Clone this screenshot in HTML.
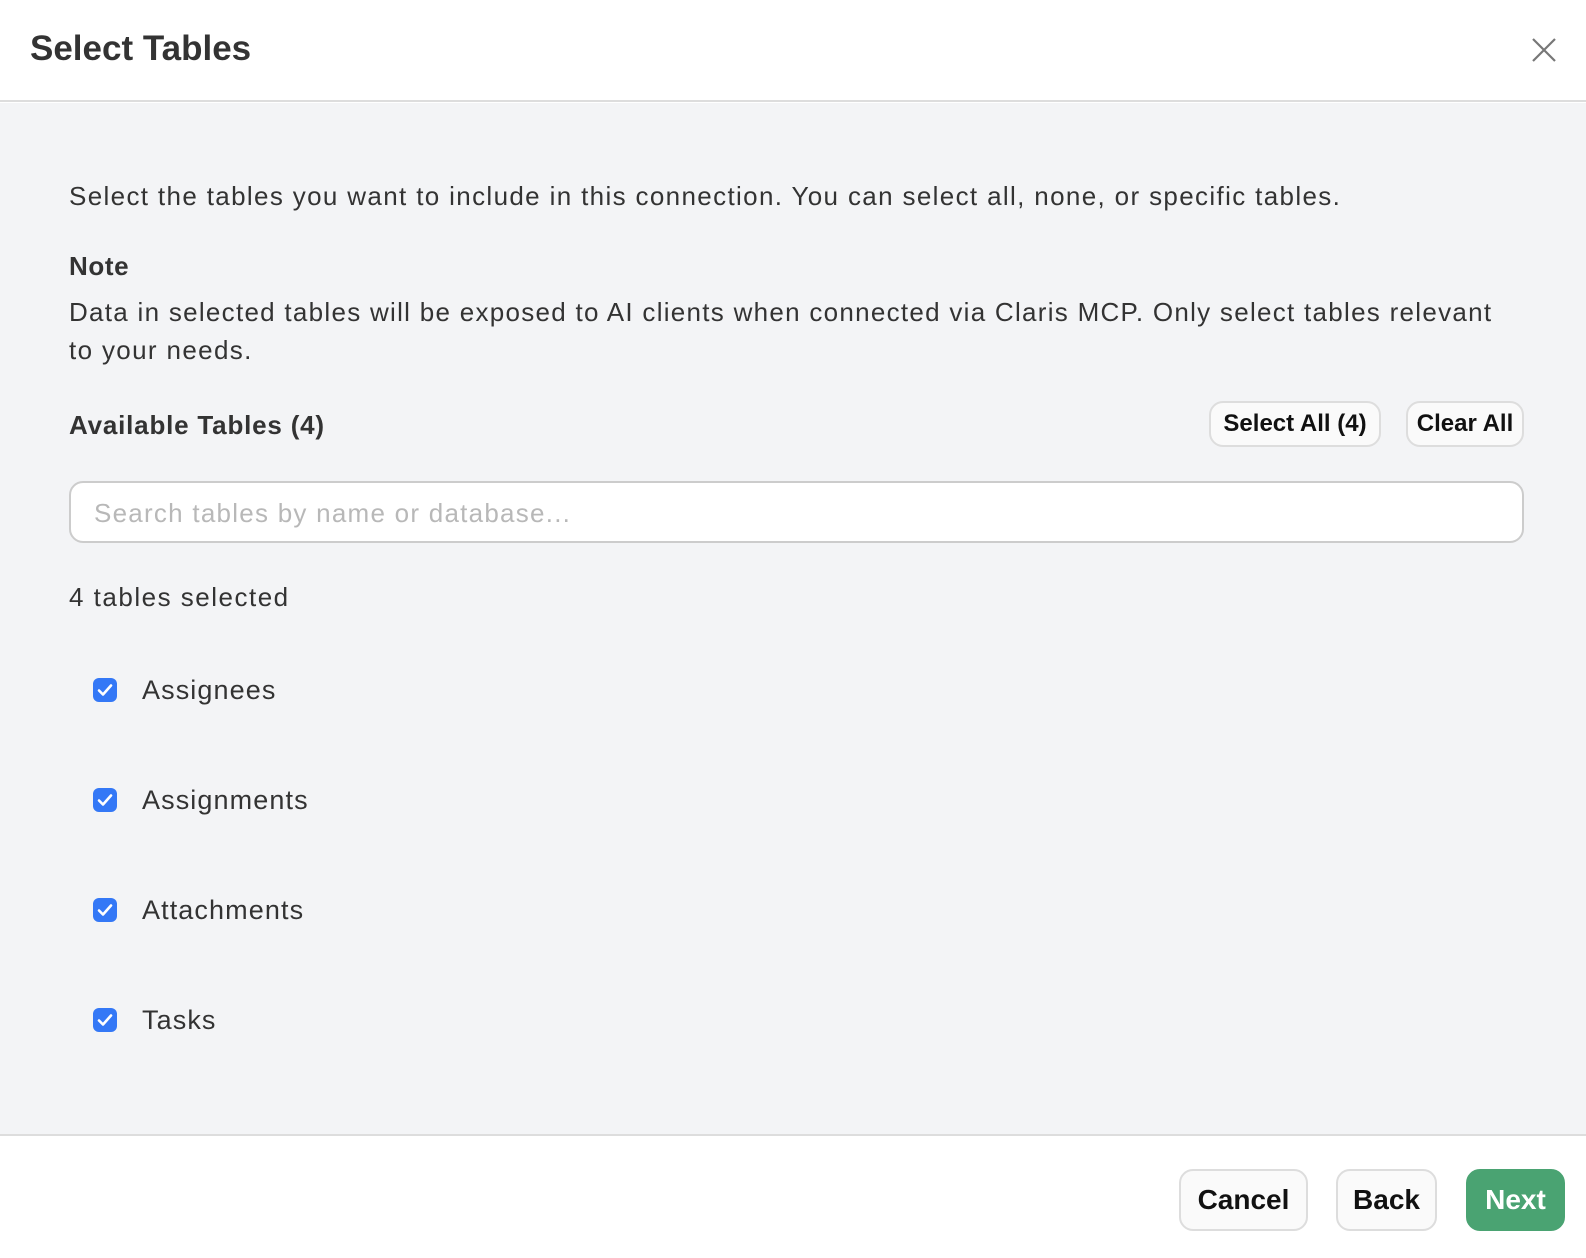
<!DOCTYPE html>
<html><head><meta charset="utf-8"><style>
*{box-sizing:border-box;margin:0;padding:0}
body{width:1586px;height:1258px;background:#fff;font-family:"Liberation Sans",Arial,sans-serif;color:#333;position:relative;overflow:hidden}
.abs{position:absolute;white-space:nowrap}
.hdr{left:0;top:0;width:1586px;height:102px;background:#fff;border-bottom:2px solid #ddd}
.main{left:0;top:103px;width:1586px;height:1031px;background:#f3f4f6}
.ftr{left:0;top:1134px;width:1586px;height:124px;background:#fff;border-top:2px solid #ddd}
.t{font-size:26px;color:#333;line-height:30px;letter-spacing:1.35px}
.btn{position:absolute;border:2px solid #ddd;background:#fafafa;border-radius:14px;font-weight:bold;color:#111;display:flex;align-items:center;justify-content:center}
.cb{position:absolute;left:93px;width:24px;height:24px;background:#3478f6;border-radius:6px}
.lbl{position:absolute;left:142px;font-size:27px;color:#333;line-height:30px;letter-spacing:1.1px}
</style></head><body>
<div class="abs hdr"></div>
<div class="abs" style="left:30px;top:29px;font-size:35px;font-weight:bold;color:#333">Select Tables</div>
<svg class="abs" style="left:1531px;top:37px" width="26" height="26" viewBox="0 0 26 26"><path d="M2 2L24 24M24 2L2 24" stroke="#777" stroke-width="2.2"/></svg>
<div class="abs main"></div>
<div class="abs t" style="left:69px;top:181px">Select the tables you want to include in this connection. You can select all, none, or specific tables.</div>
<div class="abs t" style="left:69px;top:251px;font-weight:bold;letter-spacing:0.6px">Note</div>
<div class="abs t" style="left:69px;top:297px;letter-spacing:1.28px">Data in selected tables will be exposed to AI clients when connected via Claris MCP. Only select tables relevant</div>
<div class="abs t" style="left:69px;top:335px">to your needs.</div>
<div class="abs t" style="left:69px;top:410px;font-weight:bold;letter-spacing:0.8px">Available Tables (4)</div>
<div class="btn" style="left:1209px;top:401px;width:172px;height:46px;font-size:24px">Select All (4)</div>
<div class="btn" style="left:1406px;top:401px;width:118px;height:46px;font-size:24px">Clear All</div>
<div class="abs" style="left:69px;top:481px;width:1455px;height:62px;background:#fff;border:2px solid #ccc;border-radius:14px"></div>
<div class="abs t" style="left:94px;top:498px;color:#b8b8b8;letter-spacing:1.25px">Search tables by name or database...</div>
<div class="abs t" style="left:69px;top:582px;letter-spacing:1.5px">4 tables selected</div>
<div class="cb" style="top:678px"><svg width="24" height="24"><path d="M6 12.5l4 4 8-9" stroke="#fff" stroke-width="2.6" fill="none" stroke-linecap="round" stroke-linejoin="round"/></svg></div>
<div class="lbl" style="top:675px">Assignees</div>
<div class="cb" style="top:788px"><svg width="24" height="24"><path d="M6 12.5l4 4 8-9" stroke="#fff" stroke-width="2.6" fill="none" stroke-linecap="round" stroke-linejoin="round"/></svg></div>
<div class="lbl" style="top:785px">Assignments</div>
<div class="cb" style="top:898px"><svg width="24" height="24"><path d="M6 12.5l4 4 8-9" stroke="#fff" stroke-width="2.6" fill="none" stroke-linecap="round" stroke-linejoin="round"/></svg></div>
<div class="lbl" style="top:895px">Attachments</div>
<div class="cb" style="top:1008px"><svg width="24" height="24"><path d="M6 12.5l4 4 8-9" stroke="#fff" stroke-width="2.6" fill="none" stroke-linecap="round" stroke-linejoin="round"/></svg></div>
<div class="lbl" style="top:1005px">Tasks</div>
<div class="abs ftr"></div>
<div class="btn" style="left:1179px;top:1169px;width:129px;height:62px;font-size:28px">Cancel</div>
<div class="btn" style="left:1336px;top:1169px;width:101px;height:62px;font-size:28px">Back</div>
<div class="btn" style="left:1466px;top:1169px;width:99px;height:62px;font-size:28px;background:#4aa372;border-color:#4aa372;color:#fff">Next</div>
</body></html>
